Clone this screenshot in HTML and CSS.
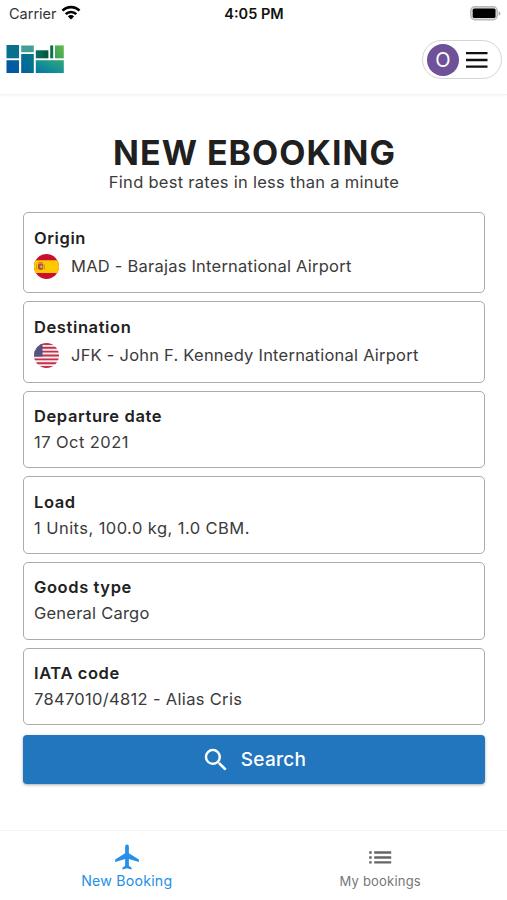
FILE: index.html
```html
<!DOCTYPE html>
<html lang="en">
<head>
<meta charset="utf-8">
<title>New eBooking</title>
<link rel="stylesheet" href="styles.css">
</head>
<body>
<div class="app">
  <div class="status">
    <div class="carrier"><span>Carrier</span>
      <svg width="20" height="16" viewBox="0 0 20 16"><g fill="none" stroke="#000" stroke-width="2.6"><path d="M1.5 5.7a12 12 0 0 1 17 0"/><path d="M4.7 9.2a7.5 7.5 0 0 1 10.6 0"/></g><path d="M6.9 11.4a4.4 4.4 0 0 1 6.2 0L10 14.5z"/></svg>
    </div>
    <div class="time">4:05 PM</div>
    <svg class="battery" width="31" height="15" viewBox="0 0 31 15"><rect x=".8" y=".8" width="26.4" height="13" rx="4" fill="#ddd" stroke="#b9b9b9" stroke-width="1.4"/><rect x="2.7" y="2.6" width="22.8" height="9.4" rx="1.6" /><path d="M28.6 5v4.8q1.8-.7 1.8-2.4T28.6 5" fill="#aaa"/></svg>
  </div>
  <header class="header">
    <svg class="logo" width="58" height="28" viewBox="0 0 58 28">
      <defs>
        <linearGradient id="blue" x1="0" y1="1" x2="1" y2="0"><stop stop-color="#0053a6"/><stop offset="1" stop-color="#07629b"/></linearGradient>
        <linearGradient id="teal" x1="0" y1="1" x2="1" y2="0"><stop stop-color="#0061a0"/><stop offset="1" stop-color="#077a86"/></linearGradient>
        <linearGradient id="wide" x1="0" y1="1" x2="1" y2="0"><stop stop-color="#0872a9"/><stop offset=".5" stop-color="#159294"/><stop offset="1" stop-color="#36a673"/></linearGradient>
        <linearGradient id="dark"><stop stop-color="#087068"/><stop offset="1" stop-color="#005535"/></linearGradient>
        <linearGradient id="green" x1="0" y1="1" x2="1" y2="0"><stop stop-color="#38a05d"/><stop offset="1" stop-color="#6aba4d"/></linearGradient>
      </defs>
      <path fill="#08708c" d="M.5 0H13v13.3H.5z"/><path fill="url(#blue)" d="M.5 15.2H13V28H.5z"/>
      <path fill="#439e97" d="M15.2.5h12.6v6.7H15.2z"/><path fill="url(#teal)" d="M15.2 9h12.6v19H15.2z"/>
      <path fill="url(#dark)" d="M29.8 5.3h12.6v8H29.8z"/><path fill="#08724b" d="M44.2.4h3v12.9h-3z"/><path fill="url(#green)" d="M49 .4h8.8v12.9H49z"/>
      <path fill="url(#wide)" d="M29.8 15.2h28V28h-28z"/>
    </svg>
    <div class="account"><div class="avatar">O</div>
      <svg width="22" height="16" viewBox="0 0 22 16"><path d="M0 1.2h21.5M0 8h21.5M0 14.6h21.5" stroke="#111" stroke-width="2.3"/></svg>
    </div>
  </header>
  <main class="main">
    <h1><span>NEW EBOOKING</span></h1>
    <p class="sub"><span>Find best rates in less than a minute</span></p>
    <div class="cards">
      <section class="card"><h2>Origin</h2>
        <div class="place"><svg class="flag" width="25" height="25" viewBox="0 0 25 25"><clipPath id="round"><circle cx="12.5" cy="12.5" r="12.5"/></clipPath><g clip-path="url(#round)"><path fill="#c8102e" d="M0 0h25v25H0z"/><path fill="#ffc800" d="M0 6.2h25v12.8H0z"/><path fill="#b5532a" d="M4 9.8h5.2v5q-2.6 2.5-5.2 0z"/><path fill="#c8803a" d="M4.6 8h4v1.8h-4z"/><path fill="#d8a8a0" d="M6.4 11.4h2v2.6h-2z"/><path stroke="#d09a28" d="M2.6 10.5v5M10.4 10.5v5"/></g></svg><span>MAD - Barajas International Airport</span></div></section>
      <section class="card"><h2>Destination</h2>
        <div class="place"><svg class="flag" width="25" height="25" viewBox="0 0 25 25"><g clip-path="url(#round)"><path fill="#f4edf0" d="M0 0h25v25H0z"/><path stroke="#c5304a" stroke-width="1.92" d="M0 .96h25M0 4.81h25M0 8.65h25M0 12.5h25M0 16.35h25M0 20.2h25M0 24.04h25"/><path fill="#50517f" d="M0 0h8.5v13.4H0z"/><path stroke="#7a7aa4" stroke-dasharray=".7 1.6" stroke-width=".6" d="M1 4h7M0 6.5h8M1 9h7M0 11.5h8"/></g></svg><span>JFK - John F. Kennedy International Airport</span></div></section>
      <section class="card"><h2>Departure date</h2><p class="figures"><span>17 Oct 2021</span></p></section>
      <section class="card"><h2>Load</h2><p class="figures"><span>1 Units, 100.0 kg, 1.0 CBM.</span></p></section>
      <section class="card"><h2>Goods type</h2><p><span>General Cargo</span></p></section>
      <section class="card"><h2>IATA code</h2><p class="code"><span>7847010/4812 - Alias Cris</span></p></section>
    </div>
    <button class="search"><svg width="30" height="30" viewBox="0 0 24 24"><path fill="currentColor" d="M15.5 14h-.79l-.28-.27A6.47 6.47 0 0 0 16 9.5 6.5 6.5 0 1 0 9.5 16c1.61 0 3.09-.59 4.23-1.57l.27.28v.79l5 4.99L20.49 19zm-6 0C7.01 14 5 11.99 5 9.5S7.01 5 9.5 5 14 7.01 14 9.5 11.99 14 9.5 14"/></svg><span>Search</span></button>
  </main>
  <nav class="tabs">
    <div class="tab active"><svg width="30" height="30" viewBox="0 0 24 24"><path fill="currentColor" d="M21.5 16v-2L13.5 9V3.5a1.5 1.5 0 0 0-3 0V9l-8 5v2l8-2.5V19l-2.2 1.5V22l3.7-1 3.7 1v-1.5L13.5 19v-5.5z"/></svg><span>New Booking</span></div>
    <div class="tab"><svg width="30" height="30" viewBox="0 0 30 30"><path stroke="#666" stroke-width="2.4" d="M4.2 10.5h2.5M9.2 10.5h17M4.2 15.5h2.5M9.2 15.5h17M4.2 20.4h2.5M9.2 20.4h17"/></svg><span>My bookings</span></div>
  </nav>
</div>
</body>
</html>
```
FILE: styles.css
```css
* { box-sizing: border-box; }
body { margin: 0; background: #fff; color: #3b3b3b; font-family: Inter, "Liberation Sans", sans-serif; }
h1, h2, p { margin: 0; white-space: nowrap; }
svg { display: block; flex: none; }
.app { width: 507px; height: 900px; display: flex; flex-direction: column; overflow: hidden; }
.status { height: 27px; display: grid; grid-template-columns: 1fr auto 1fr; align-items: center; padding: 0 7px 0 8px; color: #111; }
.carrier { display: flex; align-items: center; gap: 5px; padding-left: 1px; font-size: 14.5px; color: #333; }
.carrier svg { margin: -2px 0 0 -1px; }
.time { font-size: 14.5px; font-weight: 600; }
.battery { justify-self: end; margin: -1px -1px 0 0; }
.header { height: 68px; display: flex; justify-content: space-between; align-items: flex-start; padding: 13px 5px 0 6px; border-bottom: 1px solid #f3f3f3; box-shadow: 0 1px 2px #f5f5f5; }
.logo { margin-top: 5px; }
.account { width: 80px; height: 39px; border: 1px solid #d4d4d8; border-radius: 20px; display: flex; align-items: center; gap: 7px; padding-left: 4px; }
.avatar { width: 32px; height: 32px; border-radius: 50%; background: #6e5198; color: #fff; display: grid; place-items: center; font-size: 20px; }
.main { flex: 1; padding: 37px 22px 0 23px; }
h1 { height: 42px; line-height: 42px; text-align: center; font-size: 34px; font-weight: 700; letter-spacing: 1px; text-indent: 1px; color: #202020; }
.sub { height: 16px; line-height: 16px; text-align: center; font-size: 16.5px; letter-spacing: .28px; }
.cards { display: flex; flex-direction: column; gap: 8px; margin-top: 22px; }
.card { height: 77.6px; border: 1px solid #ababab; border-radius: 5px; padding: 13px 10px 0; }
.card:nth-child(-n+2) { height: 81.4px; }
.card h2 { font-size: 16.5px; line-height: 25px; letter-spacing: .6px; font-weight: 600; color: #222; }
.card:nth-child(n+3) { padding-top: 12.4px; }
.card p { font-size: 16.5px; line-height: 26px; letter-spacing: .22px; }
.card .figures { letter-spacing: .44px; }
.card .code { letter-spacing: .32px; }
.place { height: 30px; display: flex; align-items: center; gap: 12px; font-size: 16.5px; letter-spacing: .23px; white-space: nowrap; }
.search { width: 100%; height: 49px; margin-top: 10px; border: 0; border-radius: 4px; background: #2176bd; box-shadow: 0 1px 3px #aaa; color: #fff; display: flex; align-items: center; justify-content: center; gap: 10px; padding: 0 1px 0 0; font: 500 19px Inter, sans-serif; letter-spacing: .25px; }
.tabs { height: 70px; border-top: 1px solid #f3f3f3; display: grid; grid-template-columns: 1fr 1fr; }
.tab { display: flex; flex-direction: column; align-items: center; padding-top: 11px; font-size: 13px; line-height: 18px; letter-spacing: .2px; color: #777; }
.tab.active { font-size: 14.2px; color: #2590e6; }
```
